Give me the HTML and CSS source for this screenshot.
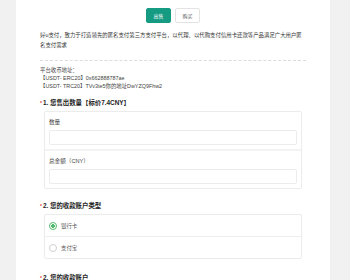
FILE: index.html
```html
<!DOCTYPE html>
<html>
<head>
  <meta charset="utf-8">
  <title>好u支付</title>
  <link rel="stylesheet" href="styles.css">
</head>
<body>
  <div class="card">
    <div class="tabs">
      <button class="tab active">出售</button>
      <button class="tab">购买</button>
    </div>
    <p class="intro">好u支付，致力于打造领先的匿名支付第三方支付平台，以代理、以代购支付信用卡还款等产品满足广大用户匿名支付需求</p>
    <div class="address">
      <div>平台收币地址：</div>
      <div>【USDT- ERC20】0x662888787ae</div>
      <div>【USDT- TRC20】TVv3te5你的地址DwYZQ9Fhw2</div>
    </div>

    <div class="question"><span class="req">*</span>1. 您售出数量【标价7.4CNY】</div>
    <div class="box">
      <div class="field">
        <div class="label">数量</div>
        <input class="input" type="text">
      </div>
      <div class="field">
        <div class="label">总金额（CNY）</div>
        <input class="input" type="text">
      </div>
    </div>

    <div class="question q2"><span class="req">*</span>2. 您的收款账户类型</div>
    <div class="box">
      <label class="option"><span class="radio checked"></span>银行卡</label>
      <label class="option"><span class="radio"></span>支付宝</label>
    </div>

    <div class="question q3"><span class="req">*</span>2. 您的收款账户</div>
  </div>
</body>
</html>
```
FILE: styles.css
```css
body, html {
  margin: 0;
  padding: 0;
  background-color: #f1f1f1;
  font-family: "Liberation Sans", "Noto Sans CJK SC", sans-serif;
  color: #333;
}
.card {
  width: 266px;
  margin: 0 auto 0 16px;
  padding: 8px 24px 20px;
  background-color: white;
  min-height: 280px;
}
.tabs {
  display: flex;
  justify-content: center;
  gap: 4px;
}
.tab {
  width: 25px;
  height: 15px;
  padding: 0;
  font-family: "Noto Sans CJK SC", sans-serif;
  font-size: 5px;
  color: #555;
  background-color: white;
  border: 1px solid #e3e3e3;
  border-radius: 2px;
}
.tab.active {
  background-color: #169b83;
  border-color: #169b83;
  color: white;
}
.intro {
  margin: 7px 0 0;
  font-size: 5.4px;
  line-height: 10px;
  color: #333;
  padding-bottom: 10px;
  border-bottom: 1px dashed #dcdcdc;
}
.address {
  padding-top: 5px;
  font-size: 5.4px;
  line-height: 8px;
  color: #444;
}
.question {
  margin-top: 8px;
  font-size: 6.4px;
  line-height: 10px;
  font-weight: bold;
  color: #222;
}
.req {
  color: #e53935;
  font-size: 5px;
  margin-right: 1px;
  vertical-align: top;
}
.box {
  margin: 3px 4px 0;
  border: 1px solid #ececec;
  border-radius: 2px;
  box-shadow: 0 0 1px rgba(0, 0, 0, 0.04);
}
.field {
  padding: 6px 4px 4px;
}
.field + .field {
  border-top: 2px solid #f3f3f3;
}
.label {
  font-size: 5.6px;
  line-height: 8px;
  color: #444;
  margin-bottom: 4px;
}
.input {
  display: block;
  box-sizing: border-box;
  width: 100%;
  height: 15px;
  border: 1px solid #ececec;
  border-radius: 2px;
  outline: none;
}
.q2 {
  margin-top: 12px;
}
.q3 {
  margin-top: 14px;
}
.option {
  display: flex;
  align-items: center;
  height: 21px;
  padding-left: 4px;
  font-size: 5.4px;
  color: #555;
}
.option + .option {
  border-top: 1px solid #eeeeee;
}
.radio {
  box-sizing: border-box;
  width: 8px;
  height: 8px;
  margin-right: 4px;
  border: 1px solid #cfcfcf;
  border-radius: 50%;
}
.radio.checked {
  border-color: #55b86e;
  background: radial-gradient(circle, #55b86e 0 1.6px, white 2px);
}
```
